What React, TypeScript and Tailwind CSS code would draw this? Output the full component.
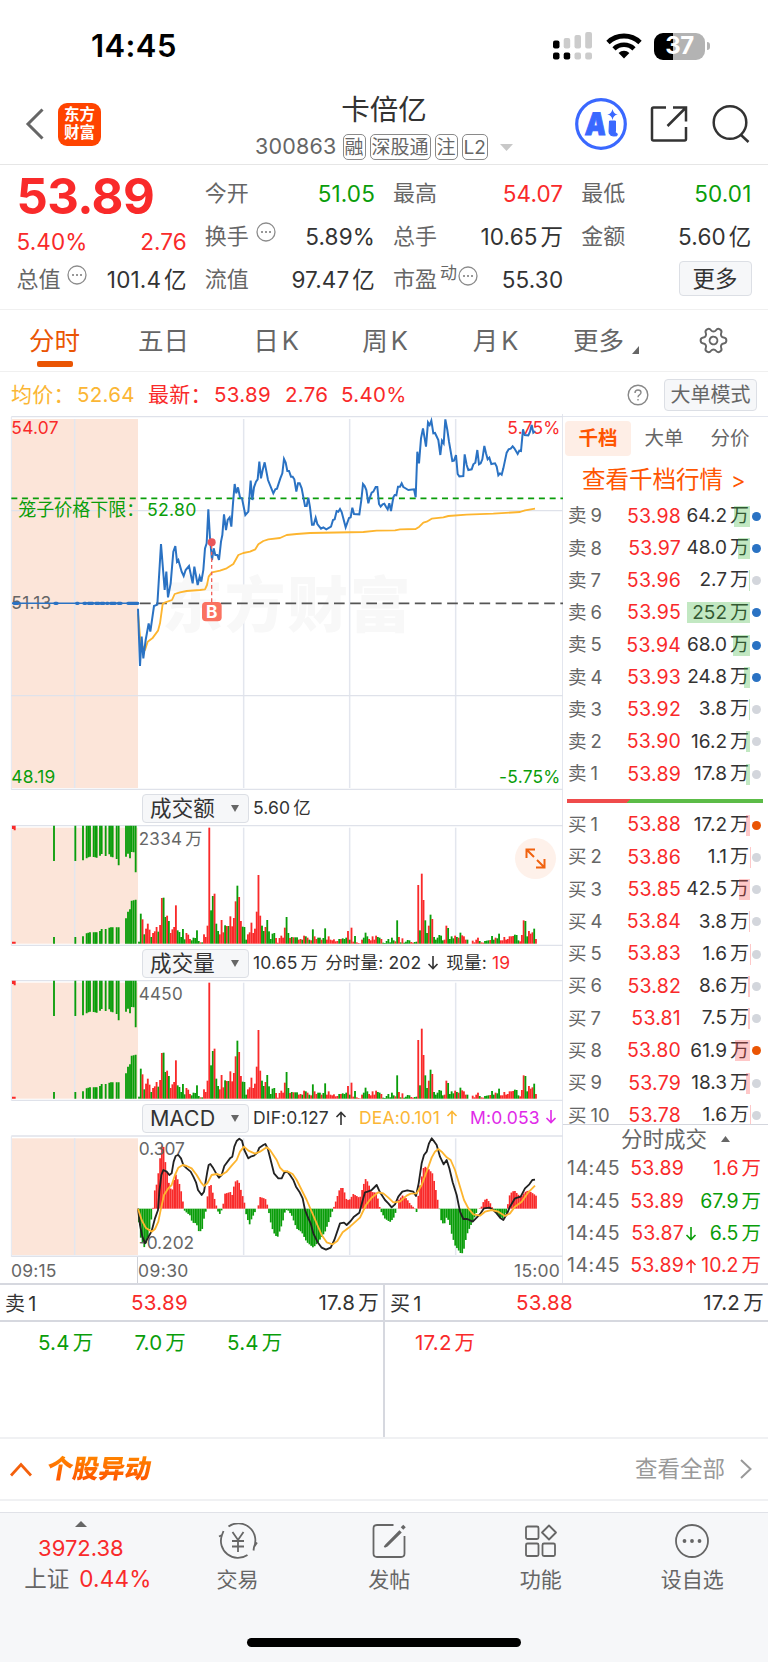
import { Settings } from "lucide-react";
import type { ReactNode } from "react";

const GREEN = "#0a9d0a";
const RED = "#f92a2a";
const GRID = "#e3e6ee";

// price chart, y grows downwards, units are thirds of a css pixel
const PRICE =
  "414,596 420,768 425,680 430,745 437,690 446,640 451,665 462,588 472,584 483,402 494,540 499,485 504,562 512,520 520,425 526,408 531,455 535,450 545,485 551,498 557,480 567,468 578,520 583,470 593,525 599,500 604,515 610,480 615,415 620,400 625,298 630,385 636,450 641,415 646,435 652,435 657,450 663,395 667,375 672,313 678,360 683,330 689,322 694,350 699,280 704,222 709,250 714,232 720,262 726,265 736,315 745,305 752,212 757,270 762,232 768,215 773,208 778,155 783,205 788,180 794,157 804,210 820,250 826,238 831,236 841,205 847,190 852,147 857,158 862,183 867,183 873,200 878,200 883,208 889,245 894,220 899,220 905,235 915,288 920,288 925,263 930,292 936,344 941,344 947,323 952,342 963,356 970,352 979,358 993,350 999,330 1004,328 1010,303 1015,305 1020,297 1025,306 1037,352 1047,324 1052,322 1057,293 1062,312 1078,313 1084,270 1089,222 1094,228 1099,240 1105,280 1110,262 1115,248 1120,245 1127,231 1132,231 1137,282 1142,290 1148,283 1153,281 1158,290 1163,298 1168,280 1173,303 1180,262 1184,255 1189,256 1194,230 1200,230 1205,220 1210,231 1215,234 1225,240 1242,238 1247,262 1252,125 1257,160 1263,85 1269,55 1278,110 1284,37 1289,45 1294,32 1300,70 1305,69 1315,90 1321,135 1326,92 1331,100 1336,28 1342,60 1347,95 1357,153 1362,152 1368,135 1373,192 1378,199 1390,198 1394,133 1400,165 1405,180 1415,178 1420,163 1426,158 1432,120 1437,163 1442,160 1447,148 1453,108 1458,130 1463,148 1468,143 1474,162 1485,160 1490,170 1495,196 1500,190 1505,194 1510,175 1520,128 1526,118 1532,116 1538,109 1543,115 1553,132 1558,122 1563,123 1569,58 1574,75 1585,76 1590,65 1595,45 1600,68 1605,64";
const AVERAGE =
  "414,610 422,700 435,720 443,695 457,685 474,662 480,640 488,582 496,577 516,570 524,552 540,547 560,543 600,540 615,538 621,525 626,500 636,487 660,482 680,475 700,462 715,435 730,429 750,425 766,418 775,403 790,393 805,388 840,384 860,375 890,372 930,369 1090,366 1130,362 1185,361 1200,358 1247,357 1258,350 1270,338 1280,335 1295,326 1330,322 1345,318 1400,314 1480,311 1560,306 1575,301 1605,296";
// matched orders before the open: [from, to]
const AUCTION = [
  [42, 54], [165, 171], [230, 234], [252, 257], [265, 278], [287, 297], [303, 312], [320, 324], [332, 346], [355, 363], [384, 413],
];

const DIF =
  "414,341 420,390 427,425 435,445 443,430 455,408 465,370 474,345 478,290 484,240 490,225 500,230 508,240 515,235 521,200 527,183 535,180 543,190 550,210 560,220 572,230 580,245 588,262 594,285 605,300 612,290 617,260 622,230 626,210 631,207 640,220 650,238 657,248 665,240 673,213 690,190 697,185 703,155 710,138 718,131 726,137 733,165 745,190 752,185 762,182 772,173 778,158 790,150 796,147 803,160 812,195 822,235 835,250 845,250 853,233 862,230 870,240 880,255 888,275 898,290 908,310 915,345 925,370 932,385 940,415 952,440 965,458 978,464 992,458 1003,435 1020,385 1032,383 1040,390 1052,378 1062,365 1078,353 1087,320 1095,292 1103,290 1115,285 1130,270 1140,292 1155,315 1165,325 1175,337 1185,328 1195,305 1207,290 1222,286 1240,290 1248,303 1256,265 1265,205 1272,180 1280,170 1287,145 1295,130 1303,140 1310,150 1320,185 1331,208 1340,195 1348,220 1358,262 1370,300 1380,350 1390,372 1402,372 1418,380 1430,368 1442,355 1452,340 1468,338 1480,345 1490,355 1502,370 1510,375 1520,358 1530,335 1545,310 1562,305 1575,280 1588,268 1597,255 1605,254";
const DEA =
  "414,341 425,375 437,398 455,410 465,402 475,380 483,340 492,300 505,280 515,270 525,240 535,218 548,210 560,213 575,220 590,240 603,262 612,273 622,265 635,240 650,237 663,241 680,230 695,212 710,195 720,170 732,155 745,167 765,176 780,170 800,157 810,165 830,195 840,218 850,228 862,229 878,237 890,255 905,285 920,315 935,350 950,385 965,420 980,442 998,448 1012,438 1028,412 1050,395 1080,368 1098,330 1115,308 1135,292 1150,295 1165,308 1180,322 1200,320 1220,302 1232,296 1250,295 1265,270 1280,230 1295,188 1305,170 1315,162 1325,170 1340,187 1352,195 1365,225 1380,275 1392,315 1405,340 1420,358 1440,362 1455,350 1475,345 1495,350 1515,363 1530,355 1545,335 1565,320 1585,292 1605,272";
const MACD =
  "415,-15 420,-80 432,-117 440,-100 446,-75 452,-45 457,-12 459,0 462,45 467,65 472,78 478,135 486,193 491,185 496,140 501,110 507,75 512,60 517,57 522,85 528,103 533,88 538,75 544,50 549,20 552,0 554,-6 560,-12 570,-20 578,-45 583,-40 591,-50 597,-70 606,-65 612,-30 618,-6 620,20 626,60 631,82 636,55 641,40 647,15 652,0 657,-20 664,-8 666,0 670,15 675,45 691,50 697,40 704,80 715,87 723,55 733,20 735,0 738,-15 744,-35 749,-47 755,-30 765,-10 770,0 775,8 780,35 796,30 803,8 805,0 808,-20 815,-55 825,-80 833,-85 845,-50 852,-25 856,-3 865,-6 875,-20 890,-60 905,-70 920,-100 940,-117 955,-100 975,-70 990,-30 998,-5 1000,0 1003,8 1010,30 1020,62 1030,62 1040,25 1050,28 1060,44 1080,32 1090,70 1098,92 1105,75 1115,50 1130,48 1138,10 1140,0 1143,-8 1155,-30 1170,-40 1180,-30 1190,-3 1192,0 1195,25 1208,40 1220,30 1232,12 1242,3 1246,0 1249,-12 1253,0 1255,40 1262,80 1272,128 1285,120 1298,105 1306,65 1315,15 1318,0 1322,-32 1332,-50 1340,-25 1348,-40 1355,-75 1365,-110 1385,-138 1392,-120 1400,-80 1410,-55 1420,-35 1430,-10 1433,0 1443,2 1452,25 1460,30 1472,15 1478,0 1480,-3 1495,-20 1508,-30 1518,-15 1521,0 1523,10 1530,45 1543,55 1552,45 1562,35 1575,50 1585,55 1600,45 1612,36";

// one bar per minute, colour letter + height
const VOLUME_AM =
  "g6 g90 r73 g28 r45 r60 r42 g20 r32 r37 r50 g36 r56 r137 g138 g80 r84 g68 r32 r43 r50 r115 g40 g35 g20 g44 g13 r32 r27 r14 g10 g18 g17 g40 g8 r4 g4 r28 r20 r54 r348 g100 g143 r150 g60 g38 r28 r71 r34 g55 r53 g53 r82 r52 r77 r127 g174 r140 r68 g51 g50 g12 r28 r34 r63 r32 r45 r96 r206 r84 g54 g38 r50 g71 g37 g14 g30 g32 r17 r3 r17 r24 r18 r48 g80 g32";
const VOLUME_PM =
  "r17 g20 r19 g19 g19 r12 r14 g12 r24 g22 r18 g12 r10 g43 r22 r14 g18 g18 r12 g17 g46 r12 r22 r12 r10 r13 r7 r8 g14 r14 g16 g14 g18 r38 g12 r48 r6 g23 r4 r2 r1 r12 g18 g33 g22 r14 r10 r22 r12 r24 g20 g18 r14 g3 g2 g8 g14 g4 g18 g10 r7 g70 r20 g4 r16 g3 g6 g11 g10 r5 r3 g5 g6 r176 g40 r210 r131 g70 g32 r54 g87 r74 g20 g12 g18 g26 g24 g10 r12 r54 g47 g14 g22 g16 r24 g20 r18 g33 r25 r22 r12 g12 g0 g0 r9 r4 r12 r18 g8 r4 r3 g8 g9 g10 r11 g23 g12 r18 g16 g30 r10 r10 r20 r12 r14 r22 r22 r23 g27 g26 g10 r7 r26 r70 g68 g22 r38 r30 r34 g45 r14";
// call auction: [x, length from the top, height from the bottom]
const AUCTION_VOLUME = [
  [162, 106, 20], [226, 106, 20], [249, 104, 22], [260, 98, 31], [265, 95, 33], [270, 93, 34], [281, 94, 34], [286, 95, 34], [290, 96, 34],
  [300, 90, 38], [305, 85, 44], [317, 91, 44], [328, 86, 48], [333, 93, 49], [338, 95, 49], [350, 100, 49], [356, 119, 49],
  [378, 93, 76], [384, 84, 96], [390, 98, 103], [395, 79, 129], [401, 80, 130], [407, 140, 132],
];

const SELLS = [
  ["9", "53.98", "64.2", 16, 1],
  ["8", "53.97", "48.0", 12, 1],
  ["7", "53.96", "2.7", 1, 0],
  ["6", "53.95", "252", 63, 1],
  ["5", "53.94", "68.0", 17, 1],
  ["4", "53.93", "24.8", 6, 1],
  ["3", "53.92", "3.8", 1, 0],
  ["2", "53.90", "16.2", 4, 0],
  ["1", "53.89", "17.8", 4, 0],
] as const;

const BUYS = [
  ["1", "53.88", "17.2", 4, 1],
  ["2", "53.86", "1.1", 0.5, 0],
  ["3", "53.85", "42.5", 11, 0],
  ["4", "53.84", "3.8", 1, 0],
  ["5", "53.83", "1.6", 0.5, 0],
  ["6", "53.82", "8.6", 2, 0],
  ["7", "53.81", "7.5", 2, 0],
  ["8", "53.80", "61.9", 15, 1],
  ["9", "53.79", "18.3", 4, 0],
  ["10", "53.78", "1.6", 0.5, 0],
] as const;

const TRADES = [
  { price: "53.89", arrow: "", volume: "1.6", up: true },
  { price: "53.89", arrow: "", volume: "67.9", up: false },
  { price: "53.87", arrow: "down", volume: "6.5", up: false },
  { price: "53.89", arrow: "up", volume: "10.2", up: true },
];

const parsePoints = (s: string) =>
  s.split(" ").map((p) => p.split(",").map(Number));

const parseBars = (s: string, start: number) =>
  s.split(" ").map((b, i) => ({
    x: start + i * 5.27,
    color: b[0] === "g" ? GREEN : RED,
    h: Number(b.slice(1)),
  }));

const volumeBars = [...parseBars(VOLUME_AM, 417), ...parseBars(VOLUME_PM, 870)];

const macdBars = (() => {
  const points = parsePoints(MACD);
  const bars: { x: number; h: number }[] = [];
  for (let x = 417; x < 1611; x += 5.27) {
    const i = Math.max(1, points.findIndex(([px]) => px >= x));
    const [x0, y0] = points[i - 1];
    const [x1, y1] = points[i];
    bars.push({ x, h: y0 + ((y1 - y0) * (x - x0)) / (x1 - x0) });
  }
  return bars;
})();

// number followed by its 万 / 亿 unit
const Value = ({ n, unit = "万" }: { n: string; unit?: string }) => (
  <span className="whitespace-nowrap">
    {n}
    <span className="ml-[3px]">{unit}</span>
  </span>
);

const Dots = ({ className = "" }: { className?: string }) => (
  <svg viewBox="0 0 20 20" className={`size-5 shrink-0 ${className}`}>
    <circle cx="10" cy="10" r="9" fill="none" stroke="#8c8c8c" strokeWidth="1.3" />
    <path d="M6 10h.01M10 10h.01M14 10h.01" stroke="#777" strokeWidth="2" strokeLinecap="round" />
  </svg>
);

const StatusBar = () => (
  <div className="flex h-[92px] items-center pl-[91px] text-black">
    <span className="w-[462px] text-[31px] font-semibold tracking-[0.4px]">14:45</span>
    <svg width="40" height="28" viewBox="0 0 40 28">
      <rect x="0" y="8.5" width="6.5" height="8" rx="2" />
      <rect x="10.7" y="6" width="6.5" height="10.5" rx="2" fill="#ccc" />
      <rect x="21.5" y="3" width="6.5" height="13.5" rx="2" fill="#ccc" />
      <rect x="32.2" y="0" width="6.8" height="16.5" rx="2" fill="#ccc" />
      <rect x="0" y="20.5" width="6.5" height="7" rx="2" />
      <rect x="10.7" y="20.5" width="6.5" height="7" rx="2" />
      <rect x="21.5" y="20.5" width="6.5" height="7" rx="2" fill="#ccc" />
      <rect x="32.2" y="20.5" width="6.8" height="7" rx="2" fill="#ccc" />
    </svg>
    <svg width="36" height="26" viewBox="0 0 36 26" className="ml-[13px]" fill="none" stroke="#000">
      <path d="M2 9.5a23 23 0 0 1 32 0" strokeWidth="4.8" />
      <path d="M8 15.8a14.5 14.5 0 0 1 20 0" strokeWidth="4.6" />
      <path d="M18 25.5l-5.4-5.6a8 8 0 0 1 10.8 0z" fill="#000" stroke="none" />
    </svg>
    <div className="ml-3 flex h-[27px] w-[51px] items-center justify-center rounded-[9px] bg-[linear-gradient(90deg,#000_37%,#b3b3b3_37%)] text-[24px] font-bold tracking-[-0.5px] text-white">
      37
    </div>
    <div className="ml-[2px] h-2 w-[3px] rounded-r-full bg-[#b3b3b3]" />
  </div>
);

const Badge = ({ children }: { children: ReactNode }) => (
  <span className="flex h-[26px] items-center rounded-[5px] border border-[#8a8a8a] px-px text-[19px] leading-none">
    {children}
  </span>
);

const Header = () => (
  <div className="grid h-[73px] grid-cols-[220px_1fr_220px] border-b border-[#e6e6e6]">
    <div className="flex items-center gap-[13px] pb-[8px] pl-[25px]">
      <svg width="20" height="32" viewBox="0 0 20 32" fill="none" stroke="#666" strokeWidth="3">
        <path d="M17.5 1.5L3 16l14.500 14.500" />
      </svg>
      <div className="flex h-[43px] w-[43px] flex-col items-center justify-center rounded-[9px] bg-[#ff4400] text-[15.500px] leading-[18px] font-bold text-white">
        <span>东方</span>
        <span>财富</span>
      </div>
    </div>
    <div className="flex flex-col items-center">
      <div className="h-[35px] text-[28.500px] leading-[36px] text-[#333]">卡倍亿</div>
      <div className="mt-[7px] flex items-center gap-1 text-[#666]">
        <span className="mr-[2px] text-[21.500px] leading-none tracking-[0.2px]">300863</span>
        <Badge>融</Badge>
        <Badge>深股通</Badge>
        <Badge>注</Badge>
        <Badge>L2</Badge>
        <svg width="13" height="7" className="ml-2" fill="#c8c8c8">
          <path d="M0 0h13l-6.500 7z" />
        </svg>
      </div>
    </div>
    <div className="flex items-center justify-end pr-[17px] pb-[8px]">
      <svg width="52" height="52" viewBox="0 0 52 52" fill="#3a68ff">
        <circle cx="26" cy="26" r="24.300" fill="none" stroke="#3a68ff" strokeWidth="3.200" />
        <text x="9.500" y="37" fontSize="31" fontWeight="900" fontFamily="Inter" stroke="#3a68ff" transform="translate(0.500 0) skewX(-4) translate(2 0)" textLength="21" lengthAdjust="spacingAndGlyphs">A</text>
        <path d="M34.500 23h6v10.500q0 2.500 1.800 2.300l-.4 2q-7.900 1.200-7.900-4z" stroke="#3a68ff" />
        <path d="M37.500 11q.8 4.800 5.200 5.500-4.400.7-5.200 5.500-.8-4.800-5.200-5.500 4.400-.7 5.200-5.500z" />
      </svg>
      <svg width="38" height="38" viewBox="0 0 38 38" className="ml-[23.500px]" fill="none" stroke="#333" strokeWidth="2.500">
        <path d="M16 2.500H3.500q-1.500 0-1.500 1.500v30q0 1.500 1.500 1.500h31q1.500 0 1.500-1.500V22M23 2.500h13v14M35.500 3L17.500 21" />
      </svg>
      <svg width="40" height="40" viewBox="0 0 40 40" className="ml-[23px]" fill="none" stroke="#333" strokeWidth="2.500">
        <circle cx="19" cy="18.500" r="16.300" />
        <path d="M29.500 30.500l8 7.500" />
      </svg>
    </div>
  </div>
);

const Stat = ({ label, extra, children, color = "text-[#333]" }: { label: string; extra?: ReactNode; children: ReactNode; color?: string }) => (
  <div className="flex h-[43px] items-center">
    <span className="text-[22px] text-[#666]">{label}</span>
    {extra}
    <span className={`ml-auto text-[22.500px] tracking-[0.15px] ${color}`}>{children}</span>
  </div>
);

const Quote = () => (
  <div className="grid h-[145px] grid-cols-4 gap-x-[18px] border-b border-[#f0f0f0] px-[16.500px] pt-[7px]">
    <div>
      <div className="h-[49px] pt-[3px] text-[49px] leading-[44px] font-bold tracking-[-0.6px] text-[#f92a2a]">53.89</div>
      <div className="flex h-[37px] items-center justify-between pt-[5px] text-[22.500px] tracking-[0.1px] text-[#f92a2a]">
        <span>5.40%</span>
        <span>2.76</span>
      </div>
      <Stat label="总值" extra={<Dots className="mb-[9px] ml-[6px]" />}>
        <Value n="101.4" unit="亿" />
      </Stat>
    </div>
    <div>
      <Stat label="今开" color="text-[#0a9d0a]">51.05</Stat>
      <Stat label="换手" extra={<Dots className="mb-[9px] ml-[7px]" />}>5.89%</Stat>
      <Stat label="流值">
        <Value n="97.47" unit="亿" />
      </Stat>
    </div>
    <div>
      <Stat label="最高" color="text-[#f92a2a]">54.07</Stat>
      <Stat label="总手">
        <Value n="10.65" />
      </Stat>
      <Stat
        label="市盈"
        extra={
          <span className="mb-3 flex items-center pl-[3px] text-[17px] text-[#666]">
            动<Dots className="mt-1 ml-px" />
          </span>
        }
      >
        55.30
      </Stat>
    </div>
    <div>
      <Stat label="最低" color="text-[#0a9d0a]">50.01</Stat>
      <Stat label="金额">
        <Value n="5.60" unit="亿" />
      </Stat>
      <button className="mt-[3px] ml-auto flex h-[35px] w-[73px] items-center justify-center rounded border border-[#dcdfe5] bg-[#f6f7f9] text-[22.500px] text-[#333]">
        更多
      </button>
    </div>
  </div>
);

const Tabs = () => (
  <div className="flex h-[62px] border-b border-[#f0f0f0] text-[25.500px] leading-[61px] text-[#666]">
    <div className="flex w-[109px] flex-col items-center text-[#ea5504]">
      <span className="h-[51px]">分时</span>
      <span className="h-[6px] w-9 rounded-[2px] bg-[#ea5504]" />
    </div>
    <div className="w-[109px] text-center">五日</div>
    <div className="w-[116px] text-center">
      日<span className="ml-[3px]">K</span>
    </div>
    <div className="w-[102px] text-center">
      周<span className="ml-[3px]">K</span>
    </div>
    <div className="w-[119px] text-center">
      月<span className="ml-[3px]">K</span>
    </div>
    <div className="flex w-[119px] items-center pl-[18px]">
      更多
      <svg width="7" height="8" className="mt-[18px] ml-2" fill="#666">
        <path d="M7 0v8H0z" />
      </svg>
    </div>
    <div className="flex flex-1 items-center pl-[24px]">
      <Settings size={31} strokeWidth={1.5} className="rotate-30" />
    </div>
  </div>
);

const InfoLine = () => (
  <div className="flex h-[42px] items-center pt-[4px] pl-[11px] text-[20.500px] tracking-[0.3px] text-[#f92a2a]">
    <span className="w-[66px] text-[21px] text-[#fbb635]">均价：</span>
    <span className="w-[71px] text-[#fbb635]">52.64</span>
    <span className="w-[66px] text-[21px]">最新：</span>
    <span className="w-[71px]">53.89</span>
    <span className="w-[56px]">2.76</span>
    <span>5.40%</span>
    <svg width="22" height="22" viewBox="0 0 22 22" className="ml-auto" fill="none" stroke="#888" strokeWidth="1.400">
      <circle cx="11" cy="11" r="9.800" />
      <path d="M8 9q0-3 3-3t3 2.600q0 1.400-1.500 2.200T11 13.200M11 15v1.600" />
    </svg>
    <button className="mr-[11px] ml-[15px] flex h-8 w-[93px] items-center justify-center rounded border border-[#dcdfe5] bg-[#f6f7f9] text-[20px] tracking-normal text-[#666]">
      大单模式
    </button>
  </div>
);

const Grid = ({ top, bottom }: { top: number; bottom: number }) => (
  <g stroke={GRID} strokeWidth="4.500">
    <rect x="36" y={top} width="378" height={bottom - top} fill="#fce5d9" stroke="none" />
    {[224, 731, 1049, 1367].map((x) => (
      <path key={x} d={`M${x} ${top}V${bottom}`} />
    ))}
    <path d={`M34 ${top - 6}V${bottom + 5}`} strokeWidth="3" />
  </g>
);

const PriceChart = () => (
  <svg width="563" height="376" viewBox="0 12 1689 1128" fontFamily="Inter, 'Noto Sans CJK SC', sans-serif" fontSize="52" letterSpacing="0.8">
    <Grid top={27} bottom={1134} />
    <text x="486" y="650" fontSize="182" fontWeight="900" letterSpacing="6" fill="#f8f8f8">
      东方财富
    </text>
    <path d="M34 20H1689M34 302H1689M34 857H1689M34 1138H1689" stroke="#dfe2ea" strokeWidth="4" />
    <text x="34" y="73" fill={RED}>54.07</text>
    <text x="1682" y="73" textAnchor="end" fill={RED}>5.75%</text>
    <text x="34" y="1119" fill={GREEN}>48.19</text>
    <text x="1682" y="1119" textAnchor="end" fill={GREEN}>-5.75%</text>
    <text x="34" y="596" fill="#666">51.13</text>
    <text x="55" y="317" fontSize="54" letterSpacing="0" fill={GREEN}>笼子价格下限：</text>
    <text x="441" y="317" fontSize="53" fill={GREEN}>52.80</text>
    <path d="M34 265H1689" stroke={GREEN} strokeWidth="5" strokeDasharray="18 14.300" />
    <path d="M420 580H1689" stroke="#555" strokeWidth="5.500" strokeDasharray="32 16.500" />
    <path d="M36 580H416" stroke="#2a72c3" strokeWidth="4.500" />
    {AUCTION.map(([from, to]) => (
      <path key={from} d={`M${from} 580H${to}`} stroke="#2a72c3" strokeWidth="10" strokeLinecap="round" />
    ))}
    <polyline points={AVERAGE} fill="none" stroke="#fdb52f" strokeWidth="5.500" strokeLinejoin="round" />
    <polyline points={PRICE} fill="none" stroke="#2a72c3" strokeWidth="6" />
    <path d="M635 405V576" stroke="#f0605a" strokeWidth="4" strokeDasharray="11 9" />
    <circle cx="635" cy="397" r="12" fill="#e9565a" />
    <rect x="606" y="576" width="59" height="58" rx="12" fill="#fa7261" />
    <text x="635.500" y="625" textAnchor="middle" fontSize="52" fontWeight="700" fill="#fff">B</text>
  </svg>
);

const VolumeChart = ({ label, unit }: { label: string; unit?: string }) => (
  <svg width="563" height="121" viewBox="0 120 1689 363" fontFamily="Inter, 'Noto Sans CJK SC', sans-serif" fontSize="51">
    <Grid top={128} bottom={476} />
    <path d="M34 122H1689M34 481H1689" stroke="#dfe2ea" strokeWidth="4" />
    <text x="416" y="180" fill="#666" letterSpacing="1">
      {label}
      {unit && <tspan dx="9">{unit}</tspan>}
    </text>
    <path d="M36 122h11v14h-6v-4h-5zM36 470h11v6h-11z" fill={RED} />
    {AUCTION_VOLUME.map(([x, down, up]) => (
      <path key={x} d={`M${x} 122v${down}M${x} 476v${-up}`} stroke={GREEN} strokeWidth="5.500" />
    ))}
    {volumeBars.map((b) => (
      <rect key={b.x} x={b.x - 2.7} y={476 - b.h} width="5.500" height={b.h} fill={b.color} />
    ))}
  </svg>
);

const MacdChart = () => (
  <svg width="563" height="122" viewBox="0 120 1689 366" fontFamily="Inter, 'Noto Sans CJK SC', sans-serif" fontSize="52">
    <Grid top={130} bottom={480} />
    <path d="M34 123H1689M34 484H1689" stroke="#dfe2ea" strokeWidth="5" />
    {macdBars.map((b) => (
      <rect key={b.x} x={b.x - 2.6} y={b.h > 0 ? 341 - b.h : 341} width="5.200" height={Math.abs(b.h)} fill={b.h > 0 ? RED : GREEN} />
    ))}
    <text x="416" y="181" fill="#666">0.307</text>
    <text x="416" y="462" fill="#666">-0.202</text>
    <polyline points={DIF} fill="none" stroke="#222" strokeWidth="5.500" strokeLinejoin="round" />
    <polyline points={DEA} fill="none" stroke="#fdb52f" strokeWidth="5.500" strokeLinejoin="round" />
  </svg>
);

const Indicator = ({ name, children }: { name: string; children: ReactNode }) => (
  <div className="flex h-[34px] items-center pl-[142px] text-[17.500px] tracking-[0.15px] whitespace-pre text-[#333]">
    <button className="mr-[4px] flex h-[29px] w-[107px] shrink-0 items-center justify-between rounded border border-[#dcdfe5] bg-[#f6f7f9] pr-[9px] pl-[7px] text-[21.500px]">
      {name}
      <svg width="8" height="7" fill="#666">
        <path d="M0 0h8L4 7z" />
      </svg>
    </button>
    {children}
  </div>
);

const Arrow = ({ up = false, className = "" }: { up?: boolean; className?: string }) => (
  <svg viewBox="0 0 12 14" className={`inline h-[14px] w-3 ${className}`} fill="none" stroke="currentColor" strokeWidth="1.600">
    <path d={up ? "M6 14V1.500M1.500 6L6 1.500 10.500 6" : "M6 0v12.500M1.500 8L6 12.500 10.500 8"} />
  </svg>
);

const Charts = () => (
  <div className="w-[563px] border-r border-[#e3e6ee] [&>svg]:block">
    <PriceChart />
    <div className="h-px" />
    <Indicator name="成交额">
      <Value n="5.60" unit="亿" />
    </Indicator>
    <VolumeChart label="2334" unit="万" />
    <Indicator name="成交量">
      <Value n="10.65" />
      <span className="ml-[7px]">分时量: 202 </span>
      <Arrow className="mr-[7px] ml-px" />
      <span>现量: </span>
      <span className="text-[#f92a2a]">19</span>
    </Indicator>
    <VolumeChart label="4450" />
    <Indicator name="MACD">
      <span>DIF:0.127 </span>
      <Arrow up className="ml-px" />
      <span className="ml-[12px] text-[#fbb635]">
        DEA:0.101 <Arrow up className="mb-1 ml-px" />
      </span>
      <span className="ml-[12px] text-[#e02ae8]">
        M:0.053 <Arrow className="mb-1" />
      </span>
    </Indicator>
    <MacdChart />
    <div className="flex h-[26px] items-center text-[17.500px] text-[#666]">
      <span className="ml-[11px] w-[126px] pt-[2px] tracking-[0.2px]">09:15</span>
      <span className="h-full border-l border-[#d0d2d8] pt-px leading-[26px] tracking-[0.4px]">09:30</span>
      <span className="mr-[2px] ml-auto pt-[2px] tracking-[0.2px]">15:00</span>
    </div>
  </div>
);

const BookRow = ({ side, row }: { side: "卖" | "买"; row: readonly [string, string, string, number, number] }) => {
  const [level, price, volume, width, big] = row;
  const sell = side === "卖";
  return (
    <div className="flex h-[32.270px] items-center pr-[7px] pl-[5px] text-[19.500px] text-[#333]">
      <span className="w-[54px] text-[18.500px] text-[#666]">
        {side}
        <span className="ml-1">{level}</span>
      </span>
      <span className="w-[59px] text-right tracking-[0.2px] text-[#f92a2a]">{price}</span>
      <span className="relative flex h-[21px] flex-1 items-center justify-end pr-px text-[19px]">
        <Value n={volume} />
        <span
          className={`absolute inset-y-0 right-0 ${sell ? "bg-[#36b336]/30" : "bg-[#fb4a4a]/30"}`}
          style={{ width }}
        />
      </span>
      <span
        className={`ml-[2px] size-[9px] rounded-full ${big ? (sell ? "bg-[#2a72c3]" : "bg-[#ea5504]") : "bg-[#d3d6dc]"}`}
      />
    </div>
  );
};

const OrderBook = () => (
  <div className="relative flex flex-1 flex-col border-t border-[#e3e6ee]">
    <div className="mt-[4px] ml-[2px] flex h-[35px] items-center text-[19.500px] text-[#666]">
      <span className="flex h-full w-[66px] items-center justify-center rounded bg-[#feeee6] font-bold text-[#ff5500]">千档</span>
      <span className="w-[66px] text-center">大单</span>
      <span className="w-[66px] text-center">分价</span>
    </div>
    <div className="flex h-[44px] items-center pl-[19px] pt-[4px] text-[23.500px] whitespace-pre text-[#ff5500]">
      查看千档行情<span className="ml-[8px] text-[22px]">&gt;</span>
    </div>
    {SELLS.map((row) => (
      <BookRow key={row[0]} side="卖" row={row} />
    ))}
    <div className="mt-[8.500px] mr-[5px] mb-[6px] ml-[3.500px] h-1 bg-[linear-gradient(135deg,#ef4b4b_45px,#5cbc47_45px)]" />
    <div className="h-[316px] overflow-hidden border-b border-[#d4d6dd]">
      {BUYS.map((row) => (
        <BookRow key={row[0]} side="买" row={row} />
      ))}
    </div>
    <div className="flex h-[28px] items-center pl-[58px] text-[21.500px] text-[#666]">
      分时成交
      <svg width="9" height="6" className="ml-[14px]" fill="#666">
        <path d="M0 6h9L4.500 0z" />
      </svg>
    </div>
    {TRADES.map((t, i) => (
      <div key={i} className="flex h-[32.300px] items-center pr-[7px] pl-[4px] text-[19.500px]">
        <span className="w-[62px] tracking-[0.5px] text-[#666]">14:45</span>
        <span className="w-[55px] text-right tracking-[0.2px] text-[#f92a2a]">{t.price}</span>
        {t.arrow && <Arrow up={t.arrow === "up"} className={t.up ? "ml-px text-[#f92a2a]" : "ml-px text-[#0a9d0a]"} />}
        <span className={`ml-auto ${t.up ? "text-[#f92a2a]" : "text-[#0a9d0a]"}`}>
          <Value n={t.volume} />
        </span>
      </div>
    ))}
  </div>
);

const Queue = ({ side, price, volume, className, children }: { side: string; price: string; volume: string; className: string; children: ReactNode }) => (
  <div className={`flex-1 ${className}`}>
    <div className="flex h-[37px] items-center border-b-2 border-[#d6d8df] pt-[2px] pr-[4px] pl-[5px] text-[20.500px] tracking-[0.3px] text-[#333]">
      <span className="w-[126px] text-[20px]">
        {side}
        <span className="ml-[3px]">1</span>
      </span>
      <span className="text-[#f92a2a]">{price}</span>
      <span className="ml-auto">
        <Value n={volume} />
      </span>
    </div>
    <div className="flex h-[42px] items-center text-[20.500px] tracking-[0.2px]">{children}</div>
  </div>
);

const NavItem = ({ label, children }: { label: string; children: ReactNode }) => (
  <div className="flex w-[151.700px] flex-col items-center">
    <svg width="40" height="36" viewBox="0 0 40 36" fill="none" stroke="#666" strokeWidth="1.800" className="mt-[10px]">
      {children}
    </svg>
    <span className="mt-[9px] text-[21px] leading-[24px] text-[#666]">{label}</span>
  </div>
);

const BottomNav = () => (
  <div className="flex h-[150px] flex-col border-t border-[#e0e2e8] bg-[#f6f7f9]">
    <div className="flex">
      <div className="flex w-[162px] flex-col items-center text-[22px] text-[#f92a2a]">
        <svg width="12" height="6" className="mt-[8px]" fill="#666">
          <path d="M0 6h12L6 0z" />
        </svg>
        <span className="mt-[7px] leading-7">3972.38</span>
        <span className="mt-[3px] ml-[14px] leading-7 whitespace-pre">
          <span className="text-[22.500px] text-[#666]">上证</span>
          <span className="ml-[10px] text-[22.500px] tracking-[0.2px]">0.44%</span>
        </span>
      </div>
      <NavItem label="交易">
        <path d="M10.500 3.500A17 17 0 0 1 36 24M36 24l-.5 3.500M36 24l3-4.500M29.500 32A17 17 0 0 1 4 12M4 12l-3 1.500M4 12L5.500 8" />
        <path d="M14.500 9L20 17l5.500-8M20 17v12M14 18h12M14 23.500h12" />
      </NavItem>
      <NavItem label="发帖">
        <path d="M24.500 2H8Q4.500 2 4.500 5.500v25Q4.500 34 8 34h24q3.500 0 3.500-3.500V13" />
        <path d="M30.500 8.500L17 22l-1.500 2 2.500-1.300L31.500 9.500z" fill="#666" />
        <path d="M33 5.500l2.500-2.500" strokeWidth="3.500" />
      </NavItem>
      <NavItem label="功能">
        <rect x="5" y="3.500" width="12.500" height="12.500" rx="1.500" />
        <rect x="5" y="20.500" width="12.500" height="12.500" rx="1.500" />
        <rect x="21.500" y="20.500" width="12.500" height="12.500" rx="1.500" />
        <path d="M28 2.500l7 7-7 7-7-7z" strokeLinejoin="round" />
      </NavItem>
      <NavItem label="设自选">
        <circle cx="20" cy="18" r="16" />
        <path d="M12.500 18h.01M20 18h.01M27.500 18h.01" strokeWidth="3.800" strokeLinecap="round" />
      </NavItem>
    </div>
    <div className="mx-auto mt-auto mb-[15px] h-[9px] w-[274px] rounded-full bg-black" />
  </div>
);

const App = () => {
  return (
    <div className="flex h-[1662px] w-[768px] flex-col overflow-hidden bg-white font-[Inter,'Noto_Sans_CJK_SC',sans-serif]">
      <StatusBar />
      <Header />
      <Quote />
      <Tabs />
      <InfoLine />
      <div className="relative flex h-[869px]">
        <Charts />
        <div className="mt-[2px] flex flex-1">
          <OrderBook />
        </div>
        {/* fullscreen toggle, floats over the volume chart */}
        <button className="absolute top-[424px] left-[515px] flex size-[41px] items-center justify-center rounded-full bg-[#fef1ea]">
          <svg width="21" height="21" viewBox="0 0 21 21" fill="none" stroke="#f0620f" strokeWidth="2">
            <path d="M1.500 10V1.500H10M1.500 1.500l7.500 7.500M19.500 11v8.500H11M19.500 19.500L12 12" />
          </svg>
        </button>
      </div>
      <div className="flex h-[154px] border-t-2 border-[#d6d8df]">
        <Queue side="卖" price="53.89" volume="17.8" className="border-r-2 border-[#d6d8df]">
          <span className="ml-[38px] flex gap-[41px] text-[#0a9d0a]">
            <Value n="5.4" />
            <Value n="7.0" />
            <Value n="5.4" />
          </span>
        </Queue>
        <Queue side="买" price="53.88" volume="17.2" className="">
          <span className="ml-[30px] text-[#f92a2a]">
            <Value n="17.2" />
          </span>
        </Queue>
      </div>
      <div className="flex h-[64px] items-center border-y-2 border-[#f0f1f3] px-[10px]">
        <svg width="22" height="15" viewBox="0 0 22 15" fill="none" stroke="#f4600c" strokeWidth="2.800">
          <path d="M1 13.500L11 2.500l10 11" />
        </svg>
        <span className="ml-[15px] skew-x-[-10deg] bg-gradient-to-b from-[#ff8a00] to-[#ff4800] bg-clip-text text-[26px] leading-8 font-black text-transparent">
          个股异动
        </span>
        <span className="ml-auto text-[22.500px] text-[#999]">查看全部</span>
        <svg width="12" height="20" viewBox="0 0 12 20" className="mr-[6px] ml-[15px]" fill="none" stroke="#999" strokeWidth="2">
          <path d="M1 1l9.500 9L1 19" />
        </svg>
      </div>
      <div className="h-[11px]" />
      <BottomNav />
    </div>
  );
};

export default App;
